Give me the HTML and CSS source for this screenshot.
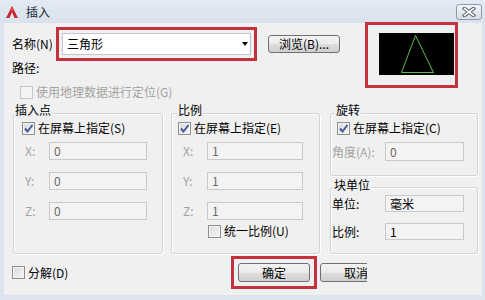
FILE: index.html
```html
<!DOCTYPE html>
<html lang="zh-CN">
<head>
    <meta charset="UTF-8">
    <title>插入</title>
    <link rel="stylesheet" href="styles.css">
</head>
<body>
    <div class="window">
        <div class="titlebar">
            <svg class="logo" width="12" height="12" viewBox="0 0 12 12">
                <polygon points="6,0 12,12 8.6,12 6,6.2 3.4,12 0,12" fill="#c9252c"/>
                <polygon points="6,0 7.4,3 6,6.2 4.6,3" fill="#e2484d"/>
            </svg>
            <span class="title">插入</span>
            <button class="close">
                <svg width="14" height="10" viewBox="0 0 14 10">
                    <path d="M2.5 1.5 L11.5 8.5 M11.5 1.5 L2.5 8.5" stroke="#5b6068" stroke-width="3.6" stroke-linecap="square"/>
                    <path d="M2.5 1.5 L11.5 8.5 M11.5 1.5 L2.5 8.5" stroke="#fff" stroke-width="1.6" stroke-linecap="square"/>
                </svg>
            </button>
        </div>

        <div class="client">
            <div class="top">
                <div class="top-left">
                    <div class="name-row">
                        <span class="name-label">名称(N)</span>
                        <div class="combo">三角形<span class="arrow"></span></div>
                        <button class="btn browse">浏览(B)...</button>
                    </div>
                    <div class="path">路径:</div>
                    <div class="check geo disabled"><span class="box"></span>使用地理数据进行定位(G)</div>
                </div>
                <div class="preview-frame">
                    <div class="preview">
                        <svg width="75" height="42" viewBox="0 0 75 42">
                            <polygon points="36.5,2.5 22.5,39.5 54.5,39.5" fill="none" stroke="#5cbf4c" stroke-width="1"/>
                        </svg>
                    </div>
                </div>
            </div>

            <div class="groups">
                <div class="group insert">
                    <div class="group-title">插入点</div>
                    <div class="check"><span class="box checked"><svg width="11" height="11" viewBox="0 0 11 11"><path d="M2 5.5 L4.5 8.5 L9.5 2" fill="none" stroke="#43599b" stroke-width="2"/></svg></span>在屏幕上指定(S)</div>
                    <div class="field-row"><span class="field-label">X:</span><span class="field">0</span></div>
                    <div class="field-row"><span class="field-label">Y:</span><span class="field">0</span></div>
                    <div class="field-row"><span class="field-label">Z:</span><span class="field">0</span></div>
                </div>

                <div class="group scale">
                    <div class="group-title">比例</div>
                    <div class="check"><span class="box checked"><svg width="11" height="11" viewBox="0 0 11 11"><path d="M2 5.5 L4.5 8.5 L9.5 2" fill="none" stroke="#43599b" stroke-width="2"/></svg></span>在屏幕上指定(E)</div>
                    <div class="field-row"><span class="field-label">X:</span><span class="field">1</span></div>
                    <div class="field-row"><span class="field-label">Y:</span><span class="field">1</span></div>
                    <div class="field-row"><span class="field-label">Z:</span><span class="field">1</span></div>
                    <div class="check uniform"><span class="box"></span>统一比例(U)</div>
                </div>

                <div class="right-col">
                    <div class="group rotate">
                        <div class="group-title">旋转</div>
                        <div class="check"><span class="box checked"><svg width="11" height="11" viewBox="0 0 11 11"><path d="M2 5.5 L4.5 8.5 L9.5 2" fill="none" stroke="#43599b" stroke-width="2"/></svg></span>在屏幕上指定(C)</div>
                        <div class="field-row"><span class="field-label">角度(A):</span><span class="field">0</span></div>
                    </div>
                    <div class="group units">
                        <div class="group-title">块单位</div>
                        <div class="field-row"><span class="field-label">单位:</span><span class="field">毫米</span></div>
                        <div class="field-row"><span class="field-label">比例:</span><span class="field">1</span></div>
                    </div>
                </div>
            </div>

            <div class="footer">
                <div class="check explode"><span class="box"></span>分解(D)</div>
                <div class="ok-mark"><button class="btn ok">确定</button></div>
                <div class="cancel-clip"><button class="btn cancel">取消</button></div>
            </div>
        </div>
    </div>
</body>
</html>
```

FILE: styles.css
```css
* {
    margin: 0;
    padding: 0;
    box-sizing: border-box;
}

body {
    font-family: "Noto Sans CJK SC", "Noto Sans", sans-serif;
    font-size: 12px;
    line-height: 14px;
    color: #000;
    background: #dbe4ef;
}

.window {
    width: 485px;
    height: 300px;
    display: flex;
    flex-direction: column;
    background: #dbe4ef;
    overflow: hidden;
}

/* title bar */
.titlebar {
    height: 23px;
    flex: none;
    display: flex;
    align-items: center;
    padding: 0 3px 0 6px;
    background: linear-gradient(#e3eaf3, #d8e2ee);
}

.title {
    margin-left: 8px;
    color: #1f2a36;
}

.close {
    margin-left: auto;
    align-self: flex-start;
    margin-top: 4px;
    width: 26px;
    height: 16px;
    display: flex;
    align-items: center;
    justify-content: center;
    border: 1px solid #8f9bab;
    border-radius: 3px;
    background: linear-gradient(#f2f5f9, #d7dee8);
}

/* client area */
.client {
    flex: 1;
    margin: 0 3px 5px 4px;
    padding-left: 8px;
    background: #f0f0f0;
}

.top {
    display: flex;
}

.name-row {
    display: flex;
    align-items: center;
    height: 22px;
    margin-top: 10px;
}

.name-label {
    width: 50px;
}

.combo {
    width: 189px;
    height: 22px;
    display: flex;
    align-items: center;
    padding-left: 4px;
    background: #fff;
    border: 1px solid #c4c6cc;
    outline: 3px solid #c3323d;
    outline-offset: 3px;
}

.arrow {
    margin-left: auto;
    margin-right: 2px;
    border-left: 3px solid transparent;
    border-right: 3px solid transparent;
    border-top: 4px solid #000;
}

.btn {
    font: inherit;
    color: #000;
    border: 1px solid #707070;
    border-radius: 3px;
    background: linear-gradient(#f3f3f3 0%, #ebebeb 50%, #dddddd 51%, #d0d0d0 100%);
}

.browse {
    width: 72px;
    height: 18px;
    margin-left: 17px;
    line-height: 14px;
}

.path {
    margin-top: 6px;
}

.preview-frame {
    width: 87px;
    height: 60px;
    margin: 2px 0 0 28px;
    padding: 8px 1px 0 11px;
    outline: 3px solid #c3323d;
}

.preview {
    width: 75px;
    height: 42px;
    background: #000;
}

.preview svg {
    display: block;
}

/* checkboxes */
.check {
    display: flex;
    align-items: center;
    height: 14px;
}

.box {
    width: 13px;
    height: 13px;
    margin-right: 3px;
    flex: none;
    border: 1px solid #8e8f8f;
    background: linear-gradient(135deg, #d9d9d9, #f8f8f8);
    box-shadow: inset 0 0 0 1px #f4f4f4;
}

.box svg {
    display: block;
}

.geo {
    margin-top: 10px;
    padding-left: 8px;
}

.disabled {
    color: #a3a3a3;
}

.disabled .box {
    border-color: #c6c6c6;
    background: #f4f4f4;
}

/* group boxes */
.groups {
    display: flex;
    margin-top: 14px;
    padding-left: 1px;
}

.group {
    border: 1px solid #d4d4d4;
    border-radius: 3px;
    box-shadow: 1px 1px 0 #fff, inset 1px 1px 0 #fff;
}

.group-title {
    width: fit-content;
    margin-top: -11px;
    padding: 0 1px;
    background: #f0f0f0;
}

.group > .check {
    margin-top: 4px;
}

.insert {
    width: 150px;
    height: 141px;
    padding-left: 8px;
}

.insert .group-title {
    margin-left: -8px;
}

.scale {
    width: 149px;
    height: 141px;
    margin-left: 8px;
    padding-left: 6px;
}

.scale .group-title {
    margin-left: -1px;
}

.field-row {
    display: flex;
    align-items: center;
    margin-top: 12px;
}

.field-row:nth-child(3) {
    margin-top: 7px;
}

.field-label {
    width: 24px;
    margin-left: 3px;
    color: #a3a3a3;
}

.scale .field-label {
    margin-left: 5px;
}

.field {
    width: 98px;
    height: 18px;
    display: flex;
    align-items: center;
    padding-left: 4px;
    color: #6a6a6a;
    background: #f3f3f3;
    border: 1px solid #c9c9c9;
}

.scale .field {
    width: 96px;
}

.uniform {
    margin-top: 12px;
    padding-left: 30px;
}

.right-col {
    width: 148px;
    margin-left: 10px;
}

.rotate {
    height: 63px;
    padding-left: 6px;
}

.rotate .group-title {
    margin-left: -2px;
}

.rotate .field-label,
.units .field-label {
    width: 53px;
    margin-left: -5px;
}

.rotate .field,
.units .field {
    width: 79px;
    height: 19px;
}

.units {
    height: 67px;
    margin-top: 11px;
    padding-left: 1px;
}

.units .group-title {
    margin-top: -10px;
    margin-left: 1px;
}

.units .field-row:nth-child(2) {
    margin-top: 3px;
}

.units .field-row {
    margin-top: 11px;
}

.units .field-label {
    margin-left: 0;
    color: #000;
}

.units .field {
    height: 17px;
    color: #000;
}

/* footer */
.footer {
    display: flex;
    align-items: center;
    height: 19px;
    margin-top: 9px;
}

.explode {
    width: 226px;
}

.ok-mark {
    display: flex;
    outline: 3px solid #c3323d;
    outline-offset: 4px;
}

.ok {
    width: 72px;
    height: 19px;
}

.cancel-clip {
    width: 47px;
    margin-left: 10px;
    overflow: hidden;
}

.cancel {
    width: 72px;
    height: 19px;
    display: block;
}
```
